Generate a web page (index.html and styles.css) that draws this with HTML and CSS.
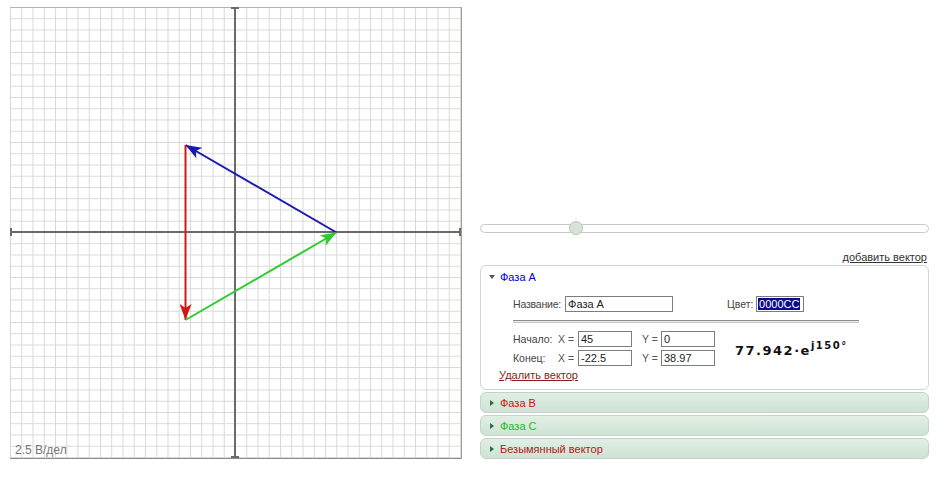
FILE: index.html
```html
<!DOCTYPE html>
<html lang="ru">
<head>
<meta charset="utf-8">
<title>Векторная диаграмма</title>
<link rel="stylesheet" href="styles.css">
</head>
<body>
<div class="page">
  <div class="plot">
    <svg class="plot-svg" width="452" height="452" viewBox="0 0 452 452" xmlns="http://www.w3.org/2000/svg">
      <defs>
        <pattern id="grid" width="11.25" height="11.25" patternUnits="userSpaceOnUse">
          <path d="M0 0.5H11.25M0.5 0V11.25" stroke="#d8d8d8" stroke-width="1" fill="none"/>
        </pattern>
        <marker id="ab" viewBox="0 0 16 12" refX="16" refY="6" markerWidth="16" markerHeight="12" markerUnits="userSpaceOnUse" orient="auto">
          <path d="M0 0L16 6L0 12L4 6z" fill="#1a1ab0"/>
        </marker>
        <marker id="ar" viewBox="0 0 16 12" refX="16" refY="6" markerWidth="16" markerHeight="12" markerUnits="userSpaceOnUse" orient="auto">
          <path d="M0 0L16 6L0 12L4 6z" fill="#d01818"/>
        </marker>
        <marker id="ag" viewBox="0 0 16 12" refX="16" refY="6" markerWidth="16" markerHeight="12" markerUnits="userSpaceOnUse" orient="auto">
          <path d="M0 0L16 6L0 12L4 6z" fill="#2ecc2e"/>
        </marker>
      </defs>
      <rect x="0" y="0" width="452" height="452" fill="#fff"/>
      <rect x="0" y="0" width="451" height="451" fill="url(#grid)"/>
      <line x1="0" y1="0.5" x2="451" y2="0.5" stroke="#b4b4b4" stroke-width="1"/>
      <line x1="0" y1="451.5" x2="451" y2="451.5" stroke="#8c8c8c" stroke-width="1"/>
      <line x1="451.5" y1="0" x2="451.5" y2="452" stroke="#8fab98" stroke-width="1"/>
      <g stroke="#6a6a6a" stroke-width="2">
        <line x1="0" y1="225" x2="451" y2="225"/>
        <line x1="225" y1="0" x2="225" y2="451"/>
        <line x1="1" y1="221" x2="1" y2="229"/>
        <line x1="450" y1="221" x2="450" y2="229"/>
        <line x1="221" y1="1" x2="229" y2="1"/>
        <line x1="221" y1="450" x2="229" y2="450"/>
      </g>
      <line x1="326.5" y1="225.5" x2="175.5" y2="138" stroke="#1a1ab0" stroke-width="2" marker-end="url(#ab)"/>
      <line x1="175.5" y1="138" x2="175.5" y2="313" stroke="#d01818" stroke-width="2" marker-end="url(#ar)"/>
      <line x1="175.5" y1="313" x2="326.5" y2="225.5" stroke="#2ecc2e" stroke-width="2" marker-end="url(#ag)"/>
      <text class="scale-label" x="5" y="447">2.5 В/дел</text>
    </svg>
  </div>

  <div class="side">
    <div class="slider">
      <div class="slider-track"></div>
      <div class="slider-handle"></div>
    </div>

    <div class="add-row"><a class="link add-link" href="#">добавить вектор</a></div>

    <div class="acc">
      <div class="panel open">
        <div class="panel-head"><span class="tri-down"></span><span class="name-a">Фаза А</span></div>
        <div class="panel-body">
          <div class="row-name">
            <span class="lbl lbl-name">Название:</span>
            <input class="inp inp-name" type="text" value="Фаза А">
            <span class="lbl lbl-color">Цвет:</span>
            <span class="inp inp-color"><span class="sel">0000CC</span></span>
          </div>
          <div class="rule"></div>
          <div class="coords">
            <div class="coord-grid">
              <span class="lbl">Начало:</span>
              <span class="lbl eq">X =</span>
              <input class="inp inp-num" type="text" value="45">
              <span class="lbl eq eq-y">Y =</span>
              <input class="inp inp-num" type="text" value="0">
              <span class="lbl">Конец:</span>
              <span class="lbl eq">X =</span>
              <input class="inp inp-num" type="text" value="-22.5">
              <span class="lbl eq eq-y">Y =</span>
              <input class="inp inp-num" type="text" value="38.97">
            </div>
            <div class="formula">77.942·e<sup>j150°</sup></div>
          </div>
          <a class="link del-link" href="#">Удалить вектор</a>
        </div>
      </div>
      <div class="panel closed"><span class="tri-right"></span><span class="name-b">Фаза В</span></div>
      <div class="panel closed"><span class="tri-right"></span><span class="name-c">Фаза С</span></div>
      <div class="panel closed"><span class="tri-right"></span><span class="name-x">Безымянный вектор</span></div>
    </div>
  </div>
</div>
</body>
</html>
```

FILE: styles.css
```css
* { box-sizing: border-box; }
html, body { margin: 0; padding: 0; background: #fff; }
body {
  font-family: "Liberation Sans", Arial, sans-serif;
  font-size: 11px;
  color: #333;
}
.page {
  display: flex;
  align-items: flex-start;
}
.plot {
  margin: 7px 0 0 10px;
  width: 452px;
  height: 452px;
}
.plot-svg { display: block; }
.scale-label {
  font-family: "Liberation Sans", Arial, sans-serif;
  font-size: 12px;
  fill: #777;
}
.side {
  margin-left: 18px;
  width: 449px;
  padding-top: 222px;
}
.slider {
  position: relative;
  height: 12px;
  display: flex;
  align-items: center;
}
.slider-track {
  width: 100%;
  height: 9px;
  border: 1px solid #c9c9c9;
  border-radius: 5px;
  background: #fff;
}
.slider-handle {
  position: absolute;
  left: 89px;
  top: -1px;
  width: 14px;
  height: 14px;
  border-radius: 50%;
  background: #d6e3d9;
  border: 1px solid #b7c7bb;
}
.add-row {
  display: flex;
  justify-content: flex-end;
  margin-top: 17px;
  padding-right: 2px;
  line-height: 13px;
}
.link { color: #333; text-decoration: underline; }
.add-link { color: #333; }
.acc {
  margin-top: 1px;
  display: flex;
  flex-direction: column;
  gap: 2px;
}
.panel {
  border: 1px solid #c3d3c7;
  border-radius: 6px;
}
.panel.open {
  background: #fff;
  border-color: #cfd6d1;
  height: 125px;
}
.panel-head {
  height: 21px;
  display: flex;
  align-items: center;
  padding-left: 8px;
}
.tri-down {
  width: 0; height: 0;
  border-left: 3px solid transparent;
  border-right: 3px solid transparent;
  border-top: 4px solid #555;
  margin-right: 5px;
}
.tri-right {
  width: 0; height: 0;
  border-top: 3px solid transparent;
  border-bottom: 3px solid transparent;
  border-left: 4px solid #2e6a40;
  margin-right: 6px;
}
.name-a { color: #0000cc; }
.name-b { color: #cc1111; }
.name-c { color: #22bb22; }
.name-x { color: #b02020; }
.panel.closed {
  height: 21px;
  display: flex;
  align-items: center;
  padding-left: 9px;
  background: linear-gradient(#e1efe5, #cde3d4);
}
.panel-body {
  padding: 9px 0 0 18px;
}
.row-name {
  display: flex;
  align-items: center;
  padding-left: 14px;
  height: 16px;
}
.lbl { color: #444; white-space: nowrap; font-size: 10.5px; }
.lbl-name { margin-right: 4px; letter-spacing: -0.2px; }
.lbl-color { margin-left: 54px; width: 29px; }
.inp {
  font-family: "Liberation Sans", Arial, sans-serif;
  font-size: 11px;
  color: #222;
  height: 16px;
  border: 1px solid #7d7d7d;
  padding: 0 2px;
  margin: 0;
  background: #fff;
  outline: none;
}
.inp-name { width: 108px; }
.inp-color {
  width: 48px;
  display: flex;
  align-items: center;
  padding: 0 1px;
}
.sel {
  background: #0a0a8a;
  color: #fff;
  line-height: 12px;
  padding: 0 1px;
}
.rule {
  margin: 8px 0 0 14px;
  width: 346px;
  height: 3px;
  border-top: 1px solid #8c8c8c;
  border-bottom: 1px solid #c4c4c4;
  background: #ececec;
}
.coords {
  display: flex;
  align-items: center;
  padding-left: 14px;
  margin-top: 8px;
}
.coord-grid {
  display: grid;
  grid-template-columns: 45px 20px 54px 29px 54px;
  grid-auto-rows: 16px;
  row-gap: 3px;
  align-items: center;
}
.eq { color: #555; }
.eq-y { padding-left: 10px; }
.inp-num { width: 54px; }
.formula {
  margin-left: 20px;
  margin-top: 3px;
  font-family: "DejaVu Sans", Verdana, sans-serif;
  font-weight: bold;
  font-size: 13px;
  letter-spacing: 1.5px;
  color: #111;
}
.formula sup {
  font-size: 10px;
  vertical-align: 6px;
  line-height: 0;
}
.del-link {
  display: inline-block;
  margin-top: 3px;
  color: #8b1c1c;
  line-height: 13px;
}
```
